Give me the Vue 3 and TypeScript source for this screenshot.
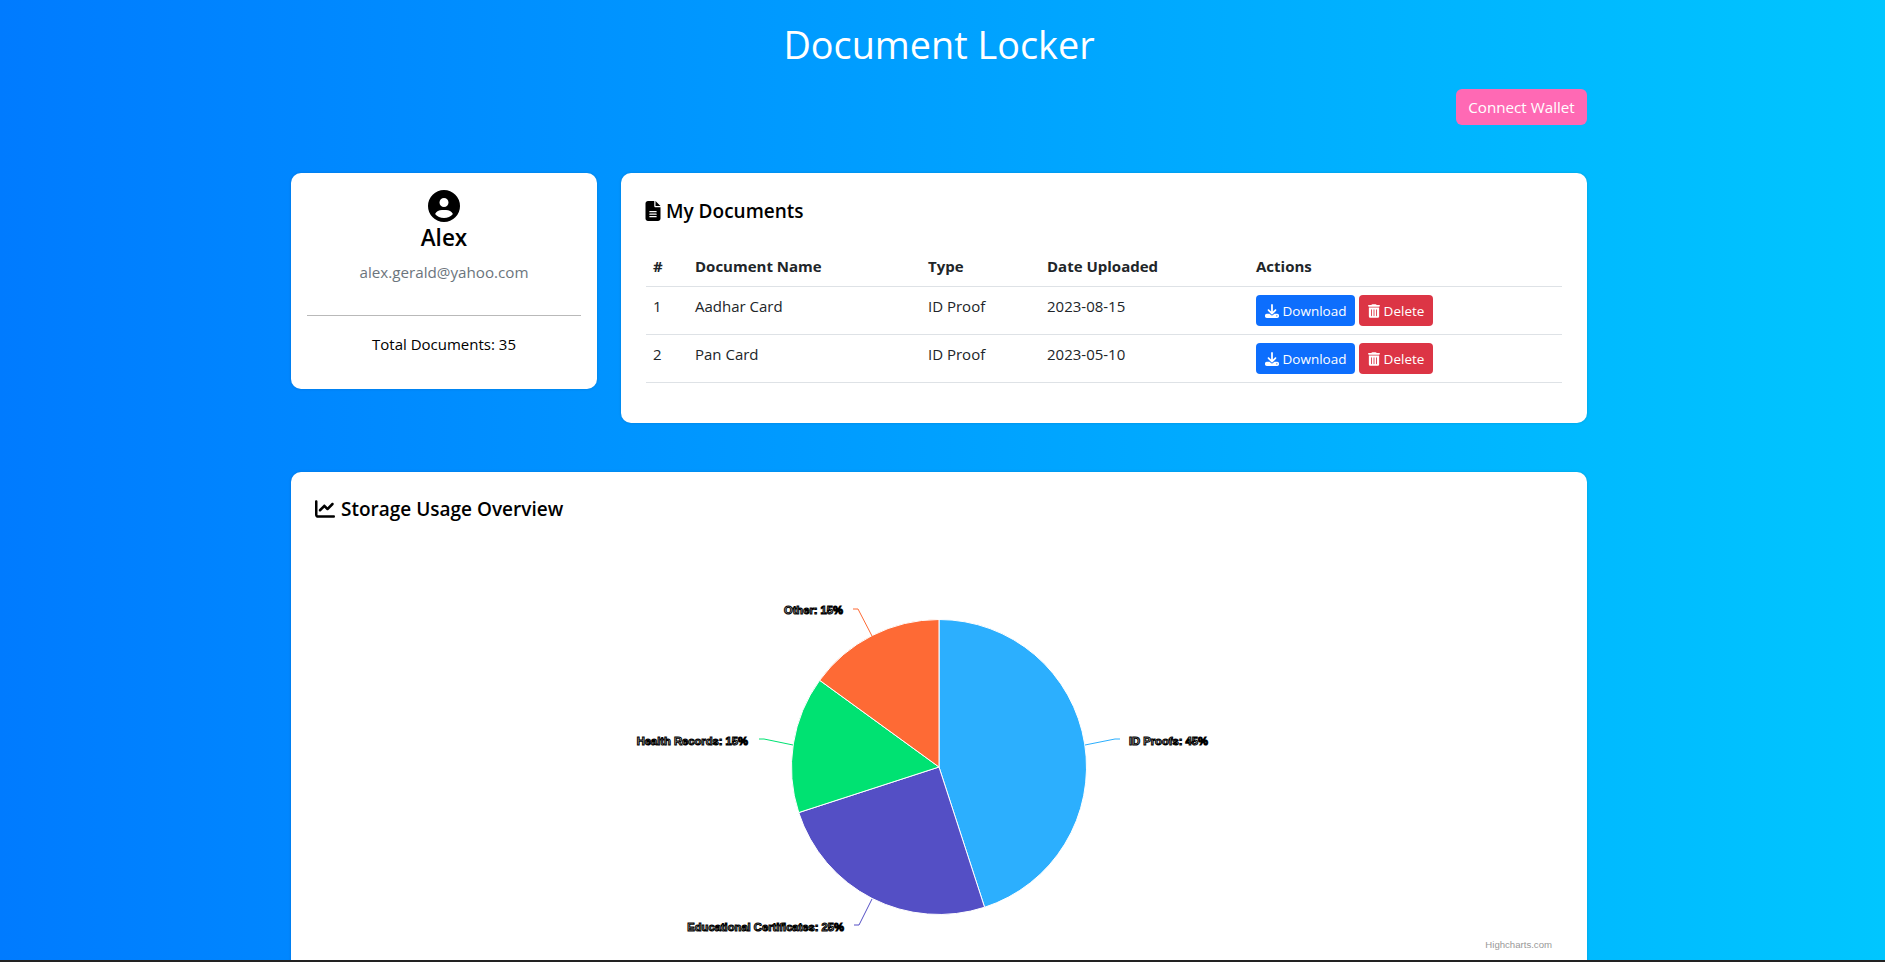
<script setup lang="ts">
interface Doc { id: number; name: string; type: string; date: string }
const docs: Doc[] = [
  { id: 1, name: 'Aadhar Card', type: 'ID Proof', date: '2023-08-15' },
  { id: 2, name: 'Pan Card', type: 'ID Proof', date: '2023-05-10' },
]
const cx = 939
const cy = 767
const r = 147.5
const data = [
  { v: 45, c: '#2caffe' },
  { v: 25, c: '#544fc5' },
  { v: 15, c: '#00e272' },
  { v: 15, c: '#fe6a35' },
]
let acc = 0
const slices = data.map((s) => {
  const a0 = (acc / 100) * Math.PI * 2
  acc += s.v
  const a1 = (acc / 100) * Math.PI * 2
  const x0 = cx + r * Math.sin(a0)
  const y0 = cy - r * Math.cos(a0)
  const x1 = cx + r * Math.sin(a1)
  const y1 = cy - r * Math.cos(a1)
  return { c: s.c, d: `M${cx} ${cy}L${x0} ${y0}A${r} ${r} 0 ${s.v > 50 ? 1 : 0} 1 ${x1} ${y1}Z` }
})
const labels = [
  { t: 'ID Proofs: 45%', x: 1129, y: 745, anchor: 'start', c: '#2caffe', p: '1120,739 1115,739 1085,745' },
  { t: 'Educational Certificates: 25%', x: 844, y: 931, anchor: 'end', c: '#544fc5', p: '854,925 859,925 872,899' },
  { t: 'Health Records: 15%', x: 748, y: 745, anchor: 'end', c: '#00e272', p: '759,739 764,739 793,745' },
  { t: 'Other: 15%', x: 843, y: 614, anchor: 'end', c: '#fe6a35', p: '853,609 858,609 872,636' },
]
</script>

<template>
  <div class="page">
    <h1 class="title">Document Locker</h1>
    <div class="wallet-row">
      <button class="wallet">Connect Wallet</button>
    </div>
    <div class="top-grid">
      <section class="card profile">
        <svg class="avatar" viewBox="0 0 512 512"><path d="M399 384.2C376.9 345.8 335.4 320 288 320H224c-47.4 0-88.9 25.8-111 64.2c35.2 39.2 86.2 63.8 143 63.8s107.8-24.7 143-63.8zM0 256a256 256 0 1 1 512 0A256 256 0 1 1 0 256zm256 16a72 72 0 1 0 0-144 72 72 0 1 0 0 144z" /></svg>
        <h2 class="name">Alex</h2>
        <p class="email">alex.gerald@yahoo.com</p>
        <hr class="rule" />
        <p class="total">Total Documents: 35</p>
      </section>
      <section class="card docs">
        <h3 class="heading">
          <svg class="h-icon" viewBox="0 0 384 512"><path d="M64 0C28.7 0 0 28.7 0 64V448c0 35.3 28.7 64 64 64H320c35.3 0 64-28.7 64-64V160H256c-17.7 0-32-14.3-32-32V0H64zM256 0V128H384L256 0zM112 256H272c8.8 0 16 7.2 16 16s-7.2 16-16 16H112c-8.8 0-16-7.2-16-16s7.2-16 16-16zm0 64H272c8.8 0 16 7.2 16 16s-7.2 16-16 16H112c-8.8 0-16-7.2-16-16s7.2-16 16-16zm0 64H272c8.8 0 16 7.2 16 16s-7.2 16-16 16H112c-8.8 0-16-7.2-16-16s7.2-16 16-16z" /></svg>
          My Documents
        </h3>
        <table class="table">
          <colgroup>
            <col class="c1" /><col class="c2" /><col class="c3" /><col class="c4" /><col class="c5" />
          </colgroup>
          <thead>
            <tr><th>#</th><th>Document Name</th><th>Type</th><th>Date Uploaded</th><th>Actions</th></tr>
          </thead>
          <tbody>
            <tr v-for="d in docs" :key="d.id">
              <td>{{ d.id }}</td>
              <td>{{ d.name }}</td>
              <td>{{ d.type }}</td>
              <td>{{ d.date }}</td>
              <td class="actions">
                <button class="btn primary">
                  <svg class="b-icon" viewBox="0 0 512 512"><path d="M288 32c0-17.7-14.3-32-32-32s-32 14.3-32 32V274.7l-73.4-73.4c-12.5-12.5-32.8-12.5-45.3 0s-12.5 32.8 0 45.3l128 128c12.5 12.5 32.8 12.5 45.3 0l128-128c12.5-12.5 12.5-32.8 0-45.3s-32.8-12.5-45.3 0L288 274.7V32zM64 352c-35.3 0-64 28.7-64 64v32c0 35.3 28.7 64 64 64H448c35.3 0 64-28.7 64-64V416c0-35.3-28.7-64-64-64H346.5l-45.3 45.3c-25 25-65.5 25-90.5 0L165.5 352H64zm368 56a24 24 0 1 1 0 48 24 24 0 1 1 0-48z" /></svg>
                  Download
                </button>
                <button class="btn danger">
                  <svg class="b-icon trash" viewBox="0 0 448 512"><path d="M135.2 17.7C140.6 6.8 151.7 0 163.8 0H284.2c12.1 0 23.2 6.8 28.6 17.7L320 32h96c17.7 0 32 14.3 32 32s-14.3 32-32 32H32C14.3 96 0 81.7 0 64S14.3 32 32 32h96l7.2-14.3zM32 128H416V448c0 35.3-28.7 64-64 64H96c-35.3 0-64-28.7-64-64V128zm96 64c-8.8 0-16 7.2-16 16V432c0 8.8 7.2 16 16 16s16-7.2 16-16V208c0-8.8-7.2-16-16-16zm96 0c-8.8 0-16 7.2-16 16V432c0 8.8 7.2 16 16 16s16-7.2 16-16V208c0-8.8-7.2-16-16-16zm96 0c-8.8 0-16 7.2-16 16V432c0 8.8 7.2 16 16 16s16-7.2 16-16V208c0-8.8-7.2-16-16-16z" /></svg>
                  Delete
                </button>
              </td>
            </tr>
          </tbody>
        </table>
      </section>
    </div>
    <section class="card storage">
      <h3 class="heading">
        <svg class="h-icon chart-icon" viewBox="0 0 512 512"><path d="M64 64c0-17.7-14.3-32-32-32S0 46.3 0 64V400c0 44.2 35.8 80 80 80H480c17.7 0 32-14.3 32-32s-14.3-32-32-32H80c-8.8 0-16-7.2-16-16V64zm406.6 86.6c12.5-12.5 12.5-32.8 0-45.3s-32.8-12.5-45.3 0L320 210.7l-57.4-57.4c-12.5-12.5-32.8-12.5-45.3 0l-112 112c-12.5 12.5-12.5 32.8 0 45.3s32.8 12.5 45.3 0L240 221.3l57.4 57.4c12.5 12.5 32.8 12.5 45.3 0l128-128z" /></svg>
        Storage Usage Overview
      </h3>
      <svg class="chart" viewBox="315 555 1248 400">
        <path v-for="s in slices" :key="s.c" :d="s.d" :fill="s.c" stroke="#fff" stroke-width="1" />
        <polyline v-for="l in labels" :key="l.c" :points="l.p" :stroke="l.c" fill="none" stroke-width="1" />
        <text v-for="l in labels" :key="l.t" class="dl" :x="l.x" :y="l.y" :text-anchor="l.anchor">{{ l.t }}</text>
        <text class="credit" x="1552" y="948" text-anchor="end">Highcharts.com</text>
      </svg>
    </section>
  </div>
</template>

<style>
html, body { margin: 0; padding: 0; overflow: hidden; }
</style>

<style scoped>
.page {
  box-sizing: border-box;
  height: 962px;
  overflow: hidden;
  padding: 0 7px 0 0;
  background: linear-gradient(90deg, #007bff, #00c6ff);
  border-bottom: 2px solid #222;
  font-family: "Open Sans", "Noto Sans", sans-serif;
  color: #000;
}
.title {
  margin: 0;
  padding-top: 20px;
  height: 49px;
  line-height: 49px;
  text-align: center;
  font-size: 37.8px;
  font-weight: 400;
  color: #fff;
}
.wallet-row {
  width: 1296px;
  margin: 20px auto 0;
  display: flex;
  justify-content: flex-end;
}
.wallet {
  height: 36px;
  width: 131px;
  padding: 0;
  border: 0;
  border-radius: 6px;
  background: #ff69b4;
  color: #fff;
  font: inherit;
  font-size: 15.2px;
}
.top-grid {
  width: 1296px;
  margin: 48px auto 0;
  display: grid;
  grid-template-columns: 306px 966px;
  gap: 24px;
  align-items: start;
}
.card {
  box-sizing: border-box;
  background: #fff;
  border-radius: 10px;
  box-shadow: 0 0 3px rgba(0, 0, 0, 0.15);
}
.profile {
  height: 216px;
  padding: 17px 16px 0;
  text-align: center;
}
.avatar { display: block; width: 32px; height: 32px; margin: 0 auto; }
.name { margin: 1px 0 0; font-size: 22.5px; line-height: 30px; font-weight: 600; }
.email { margin: 7px 0 0; font-size: 15.2px; line-height: 24px; color: #6c757d; }
.rule { margin: 31px 0 0; border: 0; border-top: 1px solid #b9b9b9; }
.total { margin: 16px 0 0; font-size: 15px; line-height: 24px; }
.docs { height: 250px; padding: 26px 24px 24px; }
.heading {
  margin: 0;
  display: flex;
  align-items: center;
  gap: 5px;
  font-size: 19px;
  line-height: 24px;
  font-weight: 600;
}
.h-icon { width: 16px; height: 20px; }
.chart-icon { width: 20px; height: 20px; }
.table {
  width: 916px;
  margin: 19px 0 0 1px;
  border-collapse: collapse;
  table-layout: fixed;
  color: #212529;
  font-size: 15px;
}
.c1 { width: 41px; } .c2 { width: 233px; } .c3 { width: 119px; } .c4 { width: 209px; } .c5 { width: 314px; }
.table th {
  height: 40px;
  padding: 4px 8px 0;
  text-align: left;
  font-weight: 700;
  border-bottom: 1px solid #dee2e6;
}
.table th:first-child, .table td:first-child { padding-left: 7px; }
.table td {
  height: 37px;
  padding: 0 8px 10px;
  border-bottom: 1px solid #dee2e6;
}
.table td.actions { padding: 0 8px; height: 47px; }
.btn {
  display: inline-flex;
  align-items: center;
  justify-content: center;
  gap: 4px;
  box-sizing: border-box;
  height: 31px;
  padding: 0;
  border: 0;
  border-radius: 4px;
  color: #fff;
  font: inherit;
  font-size: 13.5px;
  vertical-align: middle;
}
.primary { width: 99px; background: #0d6efd; margin-right: 4px; }
.danger { width: 74px; background: #dc3545; }
.b-icon { width: 14px; height: 14px; fill: #fff; }
.trash { width: 12px; }
.storage { margin: 49px auto 0; width: 1296px; height: 600px; padding: 25px 24px 24px; }
.storage .heading { gap: 6px; }
.chart { display: block; width: 1248px; height: 400px; margin-top: 34px; }
.dl {
  font-family: "Liberation Sans", sans-serif;
  font-size: 11.2px;
  font-weight: 700;
  fill: #fff;
  stroke: #000;
  stroke-width: 1.1px;
}
.credit { font-family: "Liberation Sans", sans-serif; font-size: 9.6px; fill: #999; }
</style>
